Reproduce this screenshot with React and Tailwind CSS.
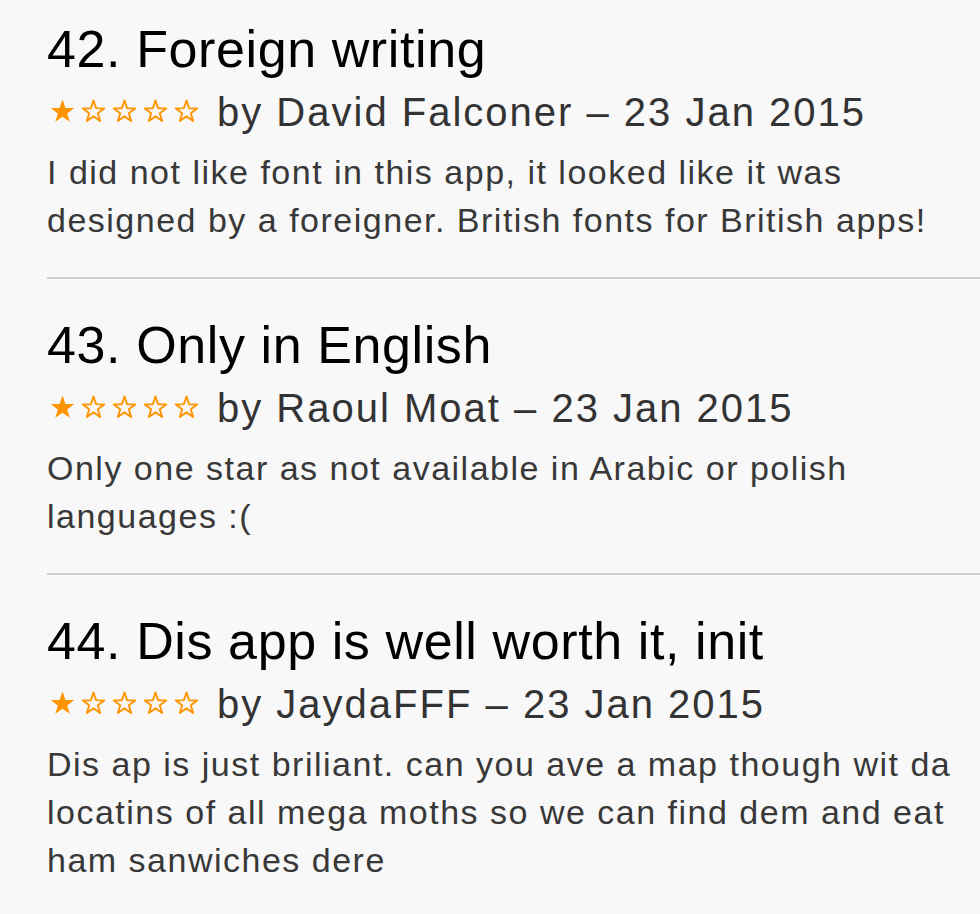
import React from 'react'

const reviews = [
    {
        n: 42,
        title: 'Foreign writing',
        author: 'David Falconer',
        date: '23 Jan 2015',
        body: 'I did not like font in this app, it looked like it was designed by a foreigner. British fonts for British apps!',
    },
    {
        n: 43,
        title: 'Only in English',
        author: 'Raoul Moat',
        date: '23 Jan 2015',
        body: 'Only one star as not available in Arabic or polish languages :(',
    },
    {
        n: 44,
        title: 'Dis app is well worth it, init',
        author: 'JaydaFFF',
        date: '23 Jan 2015',
        body: 'Dis ap is just briliant. can you ave a map though wit da locatins of all mega moths so we can find dem and eat ham sanwiches dere',
    },
]

// regular five point star in a 25x24 box
const STAR = 'M12.5 0.6L15.38 8.94L24.2 9.1L17.16 14.41L19.73 22.85L12.5 17.8L5.27 22.85L7.84 14.41L0.8 9.1L9.62 8.94Z'

const Star = ({ filled }) => (
    <svg width="25" height="24" viewBox="0 0 25 24" className="shrink-0">
        {filled ? (
            <path d={STAR} fill="#ff9500" />
        ) : (
            <path
                d={STAR}
                fill="none"
                stroke="#ff9500"
                strokeWidth="2.1"
                strokeLinejoin="round"
                transform="translate(12.5 12.9) scale(0.92) translate(-12.5 -12.9)"
            />
        )}
    </svg>
)

const Stars = ({ rating }) => (
    <div className="flex items-center gap-[6px] ml-[3px] mr-[18px] translate-y-[-1px]">
        {[1, 2, 3, 4, 5].map((i) => (
            <Star key={i} filled={i <= rating} />
        ))}
    </div>
)

const Review = ({ r, last }) => (
    <div className={`${r.n === 42 ? 'pt-[20px]' : 'pt-[37px]'} ${last ? 'pb-[20px]' : 'pb-[33px]'} pr-[24px]`}>
        <h2 className="text-[52px] leading-[58px] tracking-[0.6px] text-black font-normal">
            {r.n}. {r.title}
        </h2>
        <div className="flex items-center mt-[5px] text-[40px] leading-[58px] tracking-[2px] text-[#333]">
            <Stars rating={1} />
            <span>by {r.author} – {r.date}</span>
        </div>
        <p className="mt-[7px] text-[34px] leading-[48px] tracking-[1.5px] text-[#383838]">{r.body}</p>
    </div>
)

const App = () => {
    return (
        <div className="min-h-screen w-full bg-[#f8f8f8] pl-[47px] overflow-hidden" style={{ fontFamily: '"Liberation Sans", Arial, sans-serif' }}>
            {reviews.map((r, idx) => (
                <div key={r.n}>
                    <Review r={r} last={idx === reviews.length - 1} />
                    {idx < reviews.length - 1 && <div className="h-[2px] bg-[#cfcfcf]" />}
                </div>
            ))}
        </div>
    )
}

export default App
